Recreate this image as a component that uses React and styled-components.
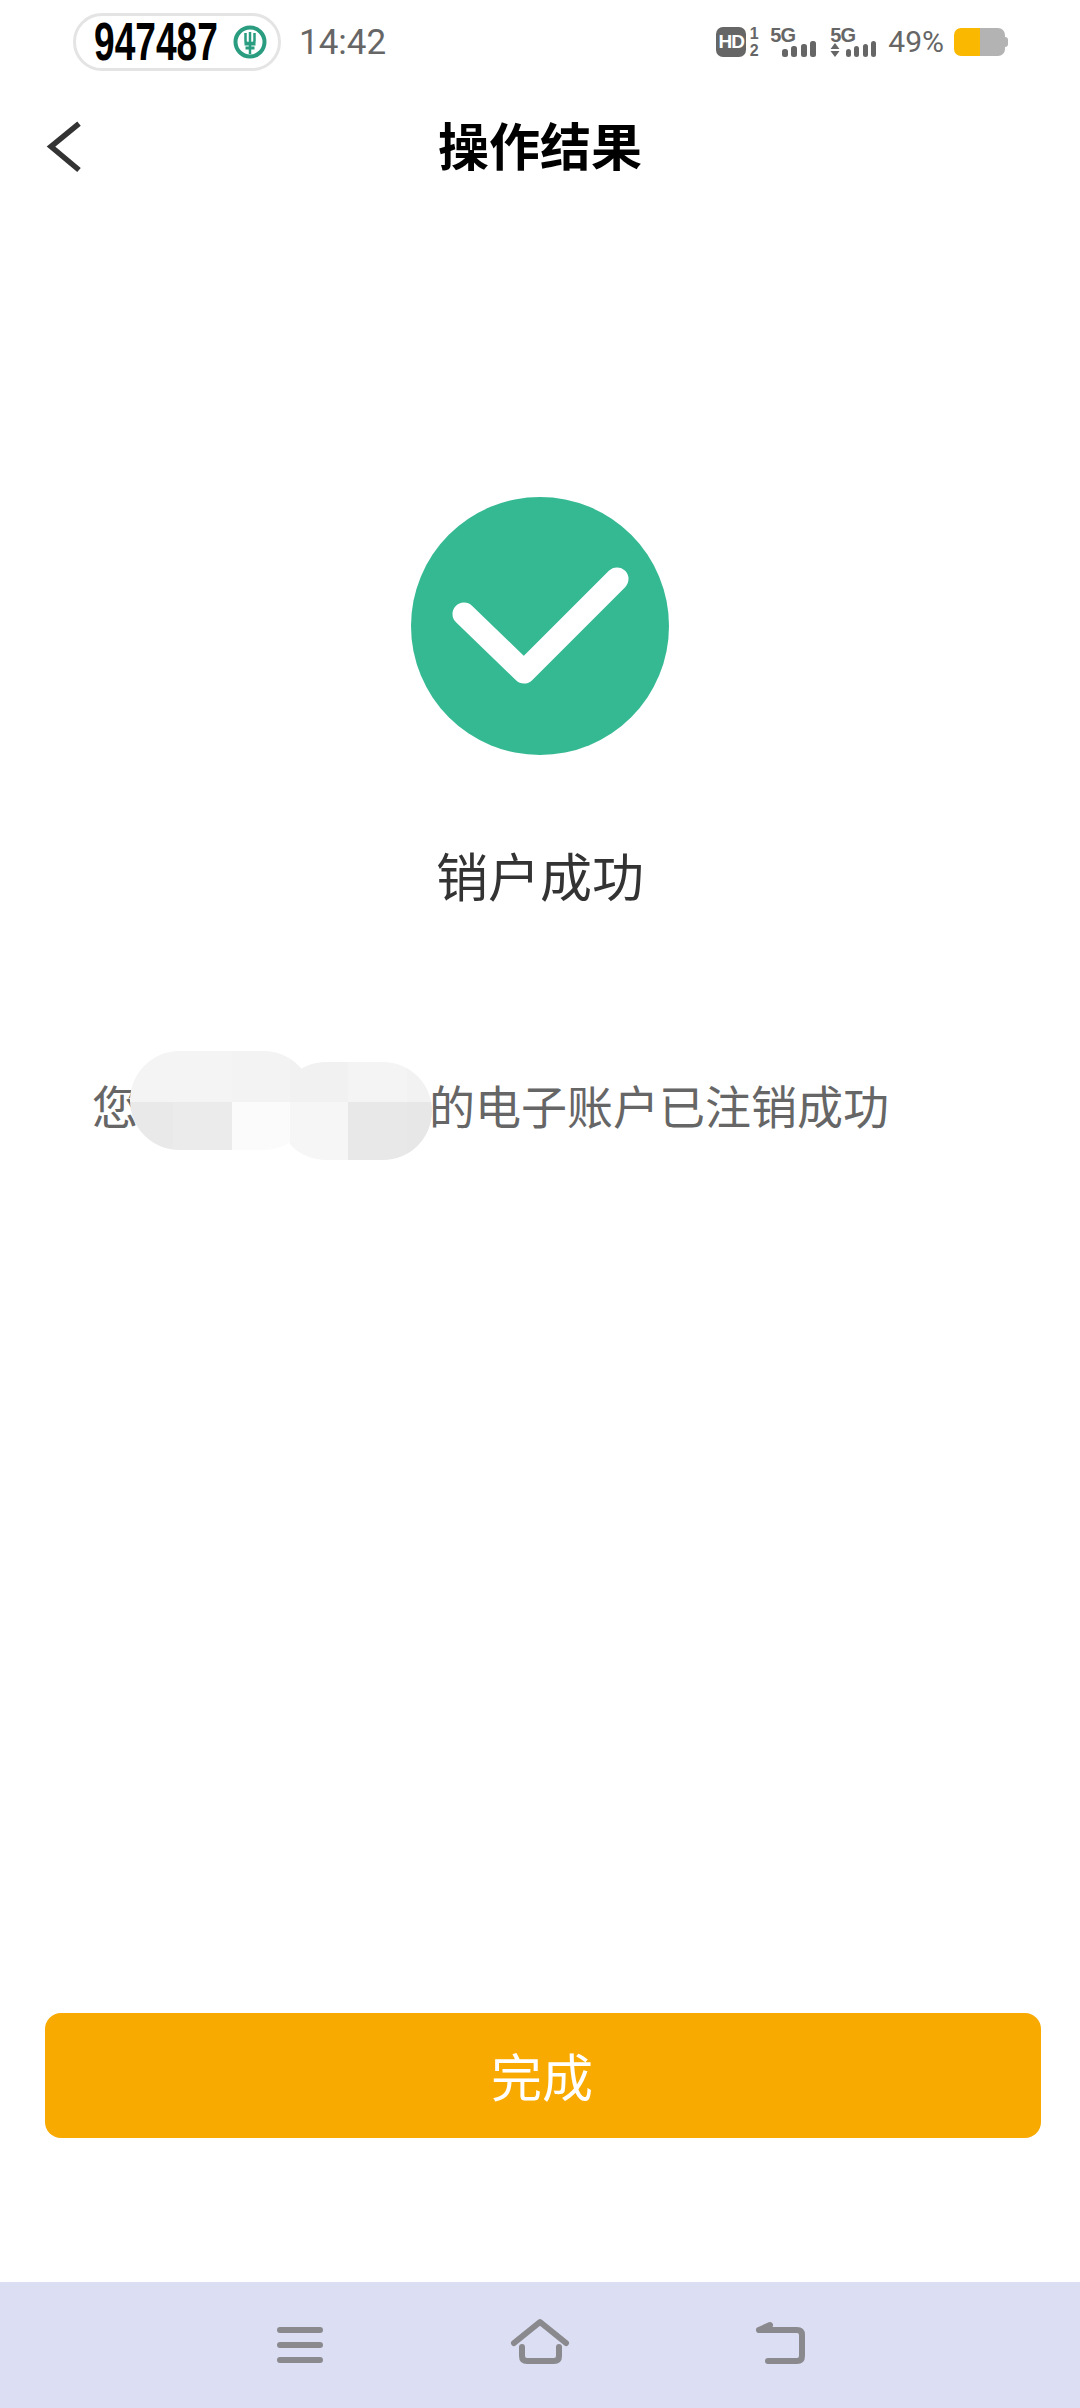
import React from 'react';
import styled, { createGlobalStyle } from 'styled-components';

const GlobalStyle = createGlobalStyle`
  html, body { margin: 0; padding: 0; background: #fff; }
  * { box-sizing: border-box; }
`;

const cjk = `"Noto Sans CJK SC", "Noto Sans", sans-serif`;

const Page = styled.div`
  width: 1080px;
  height: 2408px;
  display: flex;
  flex-direction: column;
  background: #fff;
  overflow: hidden;
  font-family: ${cjk};
`;

const StatusBar = styled.div`
  height: 84px;
  flex: none;
  display: flex;
  align-items: center;
  padding: 0 72px 0 73px;
`;

const CodePill = styled.div`
  width: 208px;
  height: 58px;
  border: 3px solid #e4e4e4;
  border-radius: 29px;
  display: flex;
  align-items: center;
  padding-left: 18px;
`;

const Code = styled.span`
  display: inline-block;
  width: 124px;
  font: bold 53px/52px "Liberation Sans", sans-serif;
  color: #000;
  transform: scaleX(0.7);
  transform-origin: left center;
  white-space: nowrap;
`;

const BankLogo = styled.svg`
  width: 36px;
  height: 36px;
  margin-left: 14px;
  flex: none;
`;

const Clock = styled.span`
  margin-left: 18px;
  font: 400 35px/1 Roboto, sans-serif;
  color: #666;
`;

const StatusRight = styled.div`
  margin-left: auto;
  display: flex;
  align-items: center;
`;

const HdBadge = styled.span`
  width: 30px;
  height: 30px;
  border-radius: 7px;
  background: #666;
  color: #fff;
  font: bold 19px/30px "Liberation Sans", sans-serif;
  text-align: center;
  letter-spacing: -1px;
`;

const SimNumbers = styled.div`
  width: 12px;
  margin-left: 2px;
  display: flex;
  flex-direction: column;
  font: bold 16px/17px "Liberation Sans", sans-serif;
  color: #666;
  text-align: center;
`;

const Signal = styled.div`
  margin-left: ${p => p.$gap}px;
  display: flex;
  flex-direction: column;
  width: ${p => p.$width}px;
`;

const SignalLabel = styled.span`
  font: bold 20px/14px "Liberation Sans", sans-serif;
  color: #666;
  letter-spacing: -1px;
`;

const SignalRow = styled.div`
  margin-top: -1px;
  height: 16px;
  display: flex;
  align-items: flex-end;
  justify-content: flex-end;
  gap: 3.5px;
`;

const Bar = styled.i`
  width: 6px;
  height: ${p => p.$h}px;
  border-radius: 2.5px;
  background: #666;
`;

const Arrows = styled.svg`
  width: 10px;
  height: 14px;
  margin-right: 2px;
  flex: none;
`;

const Percent = styled.span`
  margin-left: 12px;
  font: 400 30px/1 Roboto, sans-serif;
  color: #666;
`;

const Battery = styled.div`
  margin-left: 10px;
  width: 51px;
  height: 28px;
  border-radius: 7px;
  overflow: hidden;
  background: linear-gradient(to right, #fbb800 0 26px, #b3b3b3 26px);
`;

const BatteryWrap = styled.div`
  display: flex;
  align-items: center;
`;

const BatteryCap = styled.i`
  width: 3px;
  height: 10px;
  border-radius: 0 3px 3px 0;
  background: #b3b3b3;
`;

const Header = styled.header`
  position: relative;
  height: 126px;
  flex: none;
  display: flex;
  align-items: center;
  justify-content: center;
  padding-bottom: 6px;
`;

const BackIcon = styled.svg`
  position: absolute;
  left: 46px;
  top: 36px;
  width: 38px;
  height: 54px;
`;

const Title = styled.h1`
  margin: 0;
  font-size: 51px;
  line-height: 70px;
  font-weight: 700;
  color: #000;
`;

const ResultBlock = styled.section`
  margin-top: 287px;
  display: flex;
  flex-direction: column;
  align-items: center;
`;

const SuccessIcon = styled.svg`
  width: 258px;
  height: 258px;
`;

const ResultText = styled.div`
  margin-top: 85px;
  font-size: 52px;
  line-height: 70px;
  color: #333;
`;

const Message = styled.p`
  position: relative;
  margin: 164px 0 0;
  padding-left: 92px;
  font-size: 46px;
  line-height: 60px;
  color: #666;
  white-space: nowrap;
`;

const Hidden = styled.span`
  display: inline-block;
  width: 291px;
`;

const Blob = styled.div`
  position: absolute;
  left: ${p => p.$left}px;
  top: ${p => p.$top}px;
  width: ${p => p.$width}px;
  height: ${p => p.$height}px;
  border-radius: ${p => p.$height / 2}px;
  overflow: hidden;
  display: grid;
  grid-template-columns: ${p => p.$cols};
  grid-template-rows: ${p => p.$rows};
`;

const Cell = styled.i`
  background: ${p => p.$c};
`;

const Spacer = styled.div`
  flex: 1;
`;

const DoneButton = styled.button`
  flex: none;
  align-self: flex-start;
  margin: 0 0 144px 45px;
  width: 996px;
  height: 125px;
  border: 0;
  border-radius: 16px;
  background: #f8aa00;
  color: #fff;
  font-family: ${cjk};
  font-size: 51px;
  padding: 0 2px 2px 0;
`;

const NavBar = styled.nav`
  height: 126px;
  flex: none;
  background: #dcdef3;
`;

const NavIcons = styled.svg`
  display: block;
  width: 1080px;
  height: 126px;
`;

// the pixel mosaic over the hidden account number: both pills cut the same grid
const blobs = [
  { left: 130, top: -23, width: 183, height: 99, cols: '43px 59px 58px 23px', rows: '51px 48px',
    cells: ['#f4f4f4', '#f4f4f4', '#f3f3f3', '#f1f1f1', '#e9e9e9', '#ebebeb', '#fbfbfb', '#f6f6f6'] },
  { left: 277, top: -12, width: 155, height: 98, cols: '13px 58px 59px 25px', rows: '40px 58px',
    cells: ['#f3f3f3', '#f1f1f1', '#f4f4f4', '#f2f2f2', '#fbfbfb', '#f6f6f6', '#e8e8e8', '#e7e7e7'] },
];

function SignalBars() {
  return [8, 11, 13, 16].map(h => <Bar key={h} $h={h} />);
}

export default function App() {
  return (
    <Page>
      <GlobalStyle />
      <StatusBar>
        <CodePill>
          <Code>947487</Code>
          <BankLogo viewBox="0 0 36 36" fill="none" stroke="#2a9d80">
            <circle cx="18" cy="18" r="14.500" strokeWidth="4" />
            <path d="M13.500 9v8q0 2 2 2h5q2 0 2-2V9" strokeWidth="2.500" />
            <path d="M18 8v22" strokeWidth="2.500" />
            <path d="M12.500 20h11M13.500 24h9" strokeWidth="3" />
          </BankLogo>
        </CodePill>
        <Clock>14:42</Clock>
        <StatusRight>
          <HdBadge>HD</HdBadge>
          <SimNumbers>
            <span>1</span>
            <span>2</span>
          </SimNumbers>
          <Signal $gap={10} $width={46}>
            <SignalLabel>5G</SignalLabel>
            <SignalRow><SignalBars /></SignalRow>
          </Signal>
          <Signal $gap={14} $width={46}>
            <SignalLabel>5G</SignalLabel>
            <SignalRow>
              <Arrows viewBox="0 0 10 14" fill="#666">
                <path d="M5 0l4.500 6H.500zM.500 8h9L5 14z" />
              </Arrows>
              <SignalBars />
            </SignalRow>
          </Signal>
          <Percent>49%</Percent>
          <BatteryWrap>
            <Battery />
            <BatteryCap />
          </BatteryWrap>
        </StatusRight>
      </StatusBar>

      <Header>
        <BackIcon viewBox="0 0 38 54" fill="none" stroke="#333" strokeWidth="5.500">
          <path d="M33 3.500L5 26.500L33 50" />
        </BackIcon>
        <Title>操作结果</Title>
      </Header>

      <ResultBlock>
        <SuccessIcon viewBox="0 0 258 258">
          <circle cx="129" cy="129" r="129" fill="#35b992" />
          <path d="M53 117l60 58 93-93" fill="none" stroke="#fff" strokeWidth="23" strokeLinecap="round" strokeLinejoin="round" />
        </SuccessIcon>
        <ResultText>销户成功</ResultText>
      </ResultBlock>

      <Message>
        您<Hidden />的电子账户已注销成功
        {blobs.map(b => (
          <Blob key={b.left} $left={b.left} $top={b.top} $width={b.width} $height={b.height} $cols={b.cols} $rows={b.rows}>
            {b.cells.map((c, i) => <Cell key={i} $c={c} />)}
          </Blob>
        ))}
      </Message>

      <Spacer />
      <DoneButton>完成</DoneButton>

      <NavBar>
        <NavIcons viewBox="0 2282 1080 126" fill="none" stroke="#8a8a8e" strokeWidth="6" strokeLinecap="round" strokeLinejoin="round">
          <path d="M280 2330h40M280 2345h40M280 2360h40" />
          <path d="M514 2343l26-21 26 21" />
          <path d="M522 2347v9q0 5 5 5h27q5 0 5-5v-9" />
          <path d="M759 2330h38q5 0 5 5v21q0 5-5 5h-29M759 2330l11-5" />
        </NavIcons>
      </NavBar>
    </Page>
  );
}
